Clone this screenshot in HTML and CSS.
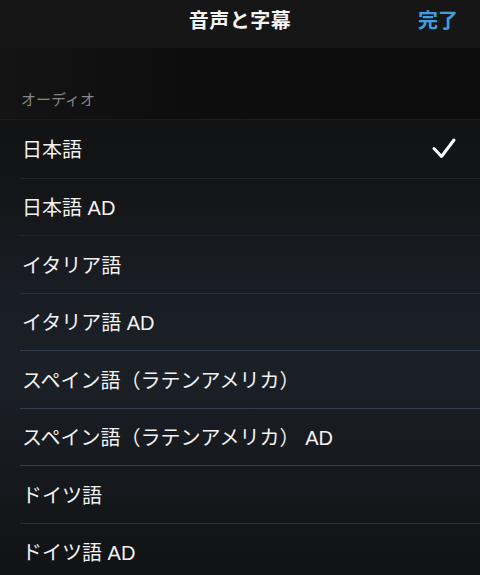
FILE: index.html
```html
<!DOCTYPE html>
<html>
    <head>
        <title>音声と字幕</title>
        <meta charset="UTF-8">
        <link rel="stylesheet" href="styles.css">
    </head>
    <body>
        <div class="cabecalho">
            <span class="titulo">音声と字幕</span>
            <span class="pronto">完了</span>
        </div>
        <div class="secao"><span>オーディオ</span></div>
        <ul class="lista">
            <li class="item">
                <span>日本語</span>
                <svg class="check" width="26" height="22" viewBox="0 0 26 22">
                    <path d="M3 11.5 L10.5 19.5 L23 3" fill="none" stroke="#fff" stroke-width="3" stroke-linecap="round" stroke-linejoin="round"/>
                </svg>
            </li>
            <li class="item"><span>日本語 AD</span></li>
            <li class="item"><span>イタリア語</span></li>
            <li class="item"><span>イタリア語 AD</span></li>
            <li class="item"><span>スペイン語（ラテンアメリカ）</span></li>
            <li class="item"><span>スペイン語（ラテンアメリカ） AD</span></li>
            <li class="item"><span>ドイツ語</span></li>
            <li class="item"><span>ドイツ語 AD</span></li>
        </ul>
    </body>
</html>
```

FILE: styles.css
```css
* {
    margin: 0;
    padding: 0;
    box-sizing: border-box;
    font-family: "Liberation Sans", "Noto Sans CJK JP", sans-serif;
}
body {
    width: 480px;
    height: 575px;
    overflow: hidden;
    background: linear-gradient(180deg, #111 0%, #131416 30%, #191d24 50%, #1b2027 65%, #15181c 85%, #111213 100%);
}
.cabecalho {
    display: flex;
    align-items: flex-start;
    justify-content: center;
    position: relative;
    height: 48px;
    padding-top: 7px;
    background-color: #161616;
}
.titulo {
    font-size: 20px;
    line-height: 28px;
    font-weight: bold;
    color: #f4f4f4;
    letter-spacing: 0.5px;
}
.pronto {
    position: absolute;
    right: 22px;
    top: 7px;
    font-size: 20px;
    line-height: 28px;
    font-weight: bold;
    color: #3e9ee0;
}
.secao {
    display: flex;
    align-items: flex-end;
    height: 71px;
    padding-left: 21px;
    padding-bottom: 9px;
    background: linear-gradient(90deg, #141414 0%, #0d0d0d 40%, #0c0c0c 100%);
}
.secao span {
    font-size: 15px;
    line-height: 20px;
    color: #888;
}
.lista {
    list-style: none;
    padding-left: 20px;
    border-top: 1px solid #1c1c1c;
}
.item {
    display: flex;
    align-items: center;
    justify-content: space-between;
    height: 57.5px;
    padding-left: 2px;
    padding-right: 25px;
    border-top: 1px solid #2c3540;
    font-size: 20px;
    color: #f2f2f2;
}
.item:first-child {
    border-top: none;
}
.item:nth-child(2),
.item:nth-child(3) {
    border-top-color: #222426;
}
.item:nth-child(4),
.item:nth-child(8) {
    border-top-color: #283039;
}
.item:nth-child(5),
.item:nth-child(6),
.item:nth-child(7) {
    border-top-color: #323e4b;
}
.check {
    margin-top: -2px;
    margin-right: -2px;
}
```
